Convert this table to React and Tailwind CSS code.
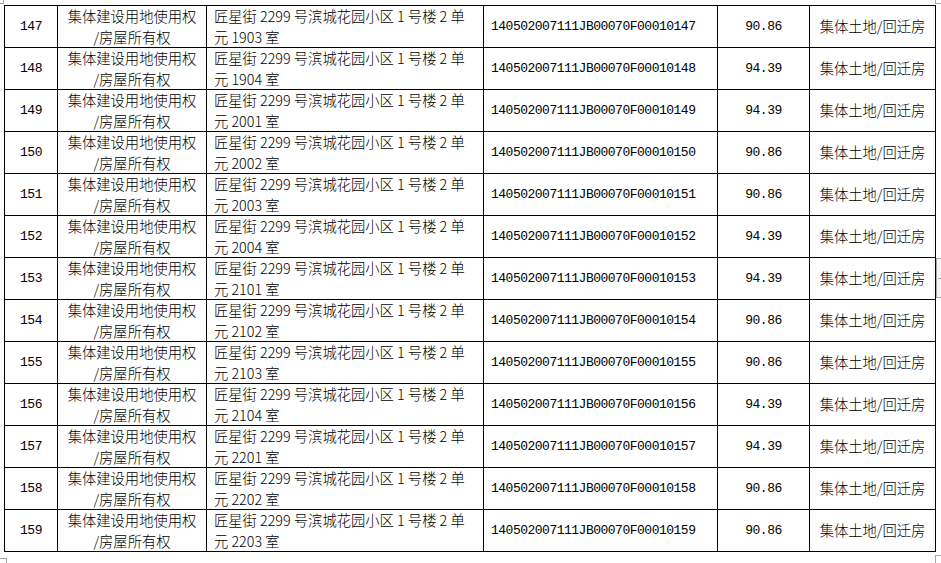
import React from 'react';

const rows = [
  ['147', '1903', '90.86'],
  ['148', '1904', '94.39'],
  ['149', '2001', '94.39'],
  ['150', '2002', '90.86'],
  ['151', '2003', '90.86'],
  ['152', '2004', '94.39'],
  ['153', '2101', '94.39'],
  ['154', '2102', '90.86'],
  ['155', '2103', '90.86'],
  ['156', '2104', '94.39'],
  ['157', '2201', '94.39'],
  ['158', '2202', '90.86'],
  ['159', '2203', '90.86'],
];

const cjk = "font-['Noto_Sans_CJK_SC',sans-serif] font-light text-[14.3px] leading-[20.5px]";
const mono = "font-['Liberation_Mono',monospace] text-[13px] tracking-[-0.5px]";

const App = () => {
  return (
    <div className="relative w-[941px] h-[563px] bg-white overflow-hidden text-black">
      {/* page corner marks */}
      <div className="absolute left-0 top-0 w-[4px] h-[4px] border-r border-b border-[#a8a8a8]" />
      <div className="absolute left-[935px] top-0 w-[6px] h-[4px] border-l border-b border-[#a8a8a8]" />
      <div className="absolute left-0 top-[558px] w-[7px] h-[5px] border-r border-t border-[#a8a8a8]" />
      <div className="absolute left-[935px] top-[555px] w-[6px] h-[8px] border-l border-t border-[#a8a8a8]" />
      {/* margin bracket */}
      <div className="absolute left-[936px] top-[258px] w-[5px] h-[40px] border-l border-t border-b border-[#a8a8a8] bg-[#f4f4f4]" />
      <div className="absolute left-[938px] top-[278px] w-[3px] h-px bg-[#a8a8a8]" />

      <div className="pl-[4px] pt-[5px]">
        <table className="table-fixed border-collapse w-[932px]">
          <colgroup>
            <col className="w-[53px]" />
            <col className="w-[149px]" />
            <col className="w-[277px]" />
            <col className="w-[234px]" />
            <col className="w-[92px]" />
            <col className="w-[126px]" />
          </colgroup>
          <tbody>
            {rows.map(([no, room, area]) => (
              <tr key={no} className="h-[42px]">
                <td className={`border border-black text-center align-middle p-0 ${mono}`}>{no}</td>
                <td className={`border border-black text-center align-middle p-0 ${cjk}`}>
                  集体建设用地使用权<br />/房屋所有权
                </td>
                <td className={`border border-black text-left align-middle px-[7px] py-0 whitespace-nowrap ${cjk}`}>
                  匠星街 2299 号滨城花园小区 1 号楼 2 单<br />元 {room} 室
                </td>
                <td className={`border border-black text-left align-middle px-[7px] py-0 whitespace-nowrap ${mono}`}>
                  140502007111JB00070F00010{no}
                </td>
                <td className={`border border-black text-center align-middle p-0 ${mono}`}>{area}</td>
                <td className={`border border-black text-center align-middle p-0 whitespace-nowrap ${cjk}`}>
                  集体土地/回迁房
                </td>
              </tr>
            ))}
          </tbody>
        </table>
      </div>
    </div>
  );
};

export default App;
